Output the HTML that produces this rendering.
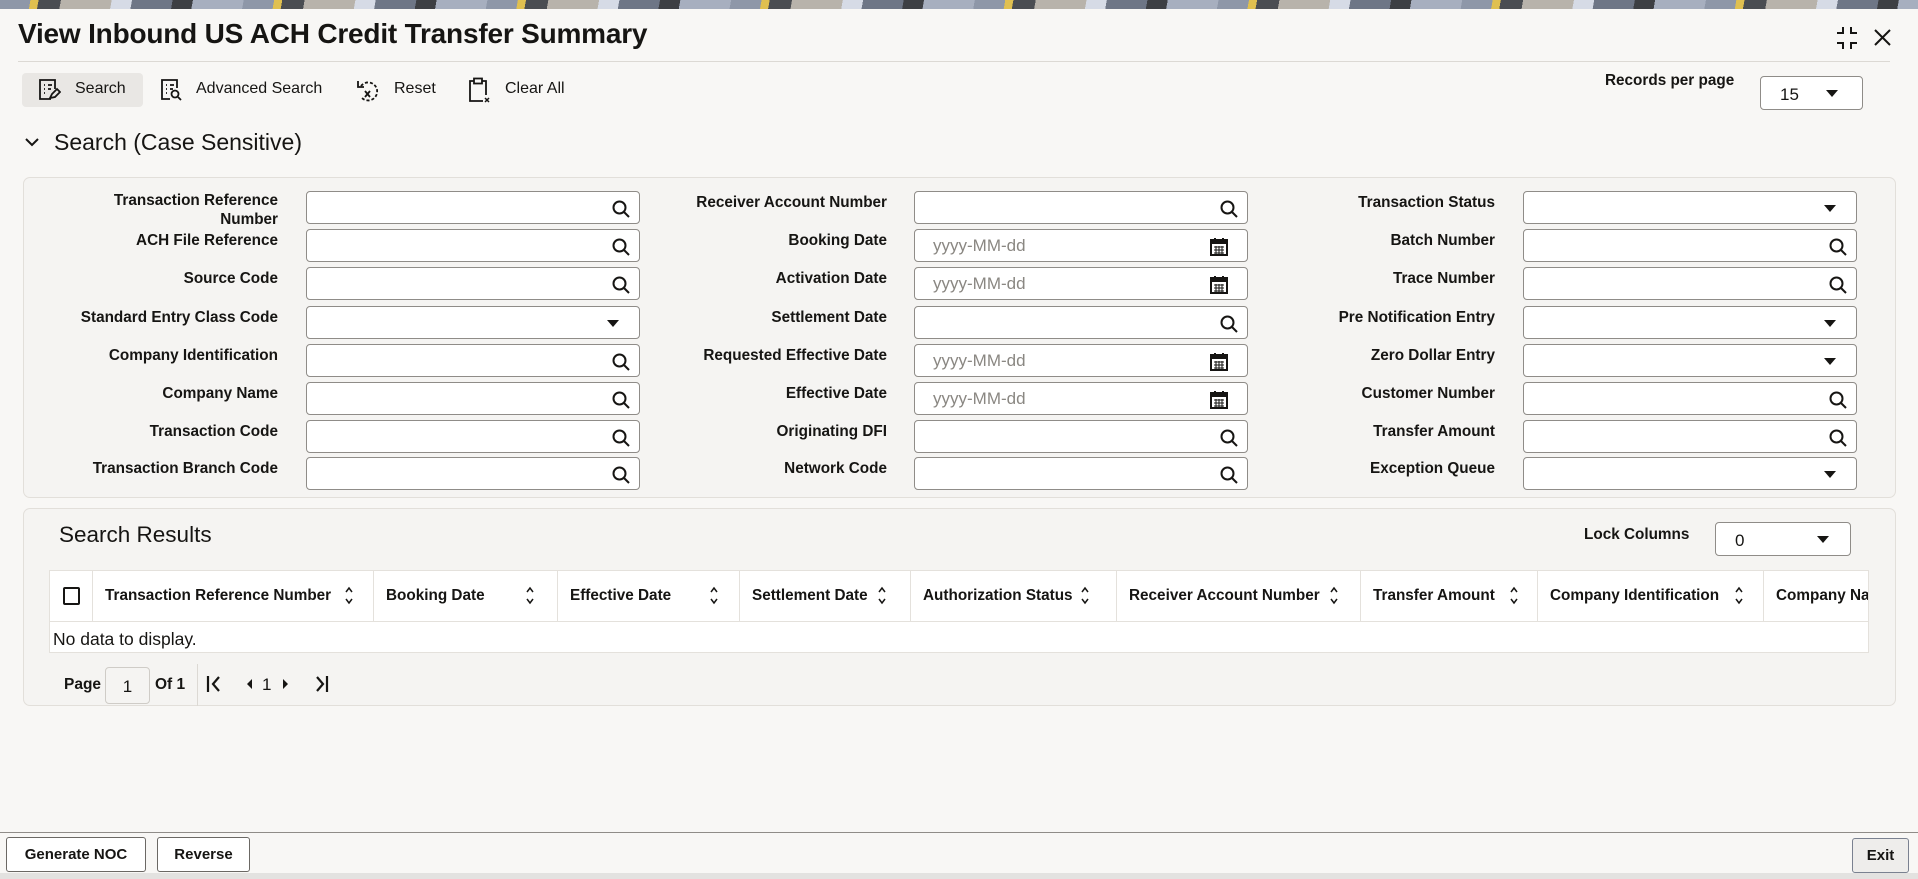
<!DOCTYPE html>
<html><head><meta charset="utf-8"><style>
*{box-sizing:border-box;margin:0;padding:0}
body{width:1918px;height:879px;position:relative;overflow:hidden;background:#f8f7f5;font-family:"Liberation Sans",sans-serif;color:#161513}
.a{position:absolute}
.banner{left:0;top:0;width:1918px;height:9px;background:repeating-linear-gradient(100deg,#8e97a8 0 30px,#e0c050 30px 38px,#4a4d52 38px 60px,#b8b3ab 60px 110px,#d6dbe6 110px 130px,#6e7686 130px 170px,#3d3f43 170px 190px,#a7afbf 190px 240px)}
.title{left:18px;top:18px;font-size:28px;font-weight:bold;letter-spacing:-0.2px}
.hr{left:18px;top:61px;width:1872px;height:1px;background:#dcd9d4}
.tb{font-size:16px;top:80px}
.panel{background:#f5f4f2;border:1px solid #e2dfda;border-radius:7px}
.lbl{font-size:15.3px;font-weight:bold;text-align:right;width:260px;line-height:19px}
.inp{background:#fff;border:1px solid #8f8c88;border-radius:4px;height:33px}
.ph{color:#8a8782;font-size:17px;position:absolute;left:18px;top:6px}
.ico{position:absolute;right:8px;top:7px}
.th{top:570px;height:51px;border-right:1px solid #e4e1dc;font-size:15.3px;font-weight:bold;line-height:51px;padding-left:12px;white-space:nowrap;overflow:hidden}
.btn{border:1px solid #6b6864;border-radius:3px;background:#fff;font-size:15px;font-weight:bold;text-align:center;line-height:33px;height:35px}
</style></head><body>
<div class="a banner"></div>
<div class="a title">View Inbound US ACH Credit Transfer Summary</div>
<svg class="a" style="left:1835px;top:25px" width="60" height="26" viewBox="0 0 60 26" fill="none" stroke="#161513" stroke-width="2"><path d="M8 2v6H2M16 2v6h6M8 24v-6H2M16 24v-6h6"/><path d="M40 5l15 15M55 5L40 20"/></svg>
<div class="a hr"></div>
<div class="a" style="left:22px;top:73px;width:121px;height:34px;background:#e9e7e4;border-radius:4px"></div>
<svg class="a" style="left:37px;top:78px" width="24" height="24" viewBox="0 0 24 24" fill="none" stroke="#161513" stroke-width="1.8"><path d="M14 21H3V2h15v9"/><path d="M7 7h1M11 7h4M7 11h1M11 11h3M7 15h1"/><path d="M13 20l2-4 5-5 3 3-5 5z"/></svg>
<div class="a tb" style="left:75px">Search</div>
<svg class="a" style="left:159px;top:78px" width="24" height="24" viewBox="0 0 24 24" fill="none" stroke="#161513" stroke-width="1.8"><path d="M11 21H3V2h15v8"/><path d="M7 7h1M11 7h4M7 11h1M11 11h3M7 15h1"/><circle cx="16" cy="16" r="3.5"/><path d="M19 19l3 3"/></svg>
<div class="a tb" style="left:196px">Advanced Search</div>
<svg class="a" style="left:355px;top:77px" width="26" height="26" viewBox="0 0 26 26" fill="none" stroke="#161513" stroke-width="1.8"><path d="M6 9a9 9 0 1 1 1 12" stroke-dasharray="3 2"/><path d="M3 4v6h6"/><path d="M10 14l5 6M15 14l-5 6"/></svg>
<div class="a tb" style="left:394px">Reset</div>
<svg class="a" style="left:468px;top:77px" width="24" height="26" viewBox="0 0 24 26" fill="none" stroke="#161513" stroke-width="1.8"><path d="M6 4H2v20h13M18 18V4h-4"/><rect x="6" y="1.5" width="8" height="5"/><path d="M17 21l4 4M21 21l-4 4" stroke-width="1.5"/></svg>
<div class="a tb" style="left:505px">Clear All</div>
<div class="a" style="left:1605px;top:72px;font-size:15.3px;font-weight:bold">Records per page</div>
<div class="a inp" style="left:1760px;top:76px;width:103px;height:34px"><span class="a" style="left:19px;top:8px;font-size:17px">15</span><svg class="a" style="left:65px;top:13px" width="12" height="8"><path d="M0 0h12L6 7z" fill="#161513"/></svg></div>
<svg class="a" style="left:24px;top:137px" width="16" height="12"><path d="M2 2l6 6 6-6" fill="none" stroke="#161513" stroke-width="2"/></svg>
<div class="a" style="left:54px;top:129px;font-size:23px">Search (Case Sensitive)</div>

<div class="a panel" style="left:23px;top:177px;width:1873px;height:321px"></div>
<div id="f"></div>

<div class="a panel" style="left:23px;top:508px;width:1873px;height:198px"></div>
<div class="a" style="left:59px;top:522px;font-size:22.5px">Search Results</div>
<div class="a" style="left:1584px;top:526px;font-size:15.3px;font-weight:bold">Lock Columns</div>
<div class="a inp" style="left:1715px;top:522px;width:136px;height:34px"><span class="a" style="left:19px;top:8px;font-size:17px">0</span><svg class="a" style="left:101px;top:13px" width="12" height="8"><path d="M0 0h12L6 7z" fill="#161513"/></svg></div>
<div class="a" style="left:49px;top:570px;width:1820px;height:83px;background:#fff;border:1px solid #e4e1dc"></div>
<div class="a" style="left:49px;top:621px;width:1820px;height:1px;background:#e4e1dc"></div>
<div class="a" style="left:63px;top:587px;width:17px;height:18px;border:2px solid #161513;border-radius:2px"></div>
<div class="a" style="left:92px;top:571px;width:1px;height:50px;background:#e4e1dc"></div>
<div class="a th" style="left:93px;width:281px">Transaction Reference Number</div>
<div class="a th" style="left:374px;width:184px">Booking Date</div>
<div class="a th" style="left:558px;width:182px">Effective Date</div>
<div class="a th" style="left:740px;width:171px">Settlement Date</div>
<div class="a th" style="left:911px;width:206px">Authorization Status</div>
<div class="a th" style="left:1117px;width:244px">Receiver Account Number</div>
<div class="a th" style="left:1361px;width:177px">Transfer Amount</div>
<div class="a th" style="left:1538px;width:226px">Company Identification</div>
<div class="a th" style="left:1764px;width:104px;border-right:none">Company Name</div>
<svg class="a" style="left:0;top:0" width="1918" height="879"><g fill="none" stroke="#161513" stroke-width="1.5">
<path d="M346 592l3-4 3 4M346 599l3 4 3-4"/><path d="M527 592l3-4 3 4M527 599l3 4 3-4"/><path d="M711 592l3-4 3 4M711 599l3 4 3-4"/><path d="M879 592l3-4 3 4M879 599l3 4 3-4"/><path d="M1082 592l3-4 3 4M1082 599l3 4 3-4"/><path d="M1331 592l3-4 3 4M1331 599l3 4 3-4"/><path d="M1511 592l3-4 3 4M1511 599l3 4 3-4"/><path d="M1736 592l3-4 3 4M1736 599l3 4 3-4"/></g></svg>
<div class="a" style="left:53px;top:629px;font-size:17.5px">No data to display.</div>
<div class="a" style="left:64px;top:676px;font-size:15.5px;font-weight:bold">Page</div>
<div class="a" style="left:105px;top:667px;width:45px;height:37px;border:1px solid #cfccc7;border-radius:4px;background:#f5f4f2;font-size:17px;text-align:center;line-height:37px">1</div>
<div class="a" style="left:155px;top:676px;font-size:15.5px;font-weight:bold">Of 1</div>
<div class="a" style="left:197px;top:664px;width:1px;height:42px;background:#dcd9d4"></div>
<svg class="a" style="left:205px;top:674px" width="135" height="20"><g fill="none" stroke="#161513" stroke-width="2.2"><path d="M3 2v16M14 3l-6 7 6 7"/><path d="M112 3l6 7-6 7M122 2v16"/></g><path d="M47 5v10l-5-5z M78 5v10l5-5z" fill="#161513"/><text x="57" y="16" font-family="Liberation Sans" font-size="17" fill="#161513">1</text></svg>

<div class="a" style="left:0;top:832px;width:1918px;height:1px;background:#8f8c88"></div>
<div class="a btn" style="left:6px;top:837px;width:140px">Generate NOC</div>
<div class="a btn" style="left:157px;top:837px;width:93px">Reverse</div>
<div class="a btn" style="left:1852px;top:838px;width:57px;background:#eeedeb;border-color:#7a8190">Exit</div>
<div class="a" style="left:0;top:873px;width:1918px;height:6px;background:#e3e2e0"></div>
<script>
var cols=[[278,306,[["Transaction Reference<br>Number","s"],["ACH File Reference","s"],["Source Code","s"],["Standard Entry Class Code","d"],["Company Identification","s"],["Company Name","s"],["Transaction Code","s"],["Transaction Branch Code","s"]]],
[887,914,[["Receiver Account Number","s"],["Booking Date","c"],["Activation Date","c"],["Settlement Date","s"],["Requested Effective Date","c"],["Effective Date","c"],["Originating DFI","s"],["Network Code","s"]]],
[1495,1523,[["Transaction Status","d"],["Batch Number","s"],["Trace Number","s"],["Pre Notification Entry","d"],["Zero Dollar Entry","d"],["Customer Number","s"],["Transfer Amount","s"],["Exception Queue","d"]]]];
var tops=[191,229,267,306,344,382,420,457],h="";
var S='<svg class="ico" width="20" height="20" viewBox="0 0 20 20" fill="none" stroke="#161513" stroke-width="2"><circle cx="8.5" cy="8.5" r="6"/><path d="M13 13l5 5"/></svg>';
var D='<svg class="ico" style="right:20px;top:13px" width="12" height="8"><path d="M0 0h12L6 7z" fill="#161513"/></svg>';
var C='<svg class="ico" style="right:18px;top:7px" width="20" height="20" viewBox="0 0 20 20"><rect x="2" y="3" width="16" height="15" fill="none" stroke="#161513" stroke-width="2"/><path d="M2 3h16v4H2z" fill="#161513"/><path d="M6 1v4M14 1v4" stroke="#161513" stroke-width="2"/><path d="M5 10h10M5 13h10M5 16h10M7 9v8M10 9v8M13 9v8" stroke="#161513" stroke-width="1"/></svg>';
cols.forEach(function(c){c[2].forEach(function(f,i){var t=tops[i];
h+='<div class="a lbl" style="left:'+(c[0]-260)+'px;top:'+(t+(i==0&&c[0]==278?0:2))+'px">'+f[0]+'</div>';
h+='<div class="a inp" style="left:'+c[1]+'px;top:'+t+'px;width:334px">'+(f[1]=="s"?S:f[1]=="d"?D:'<span class="ph">yyyy-MM-dd</span>'+C)+'</div>';});});
document.getElementById("f").innerHTML=h;
</script>
</body></html>
